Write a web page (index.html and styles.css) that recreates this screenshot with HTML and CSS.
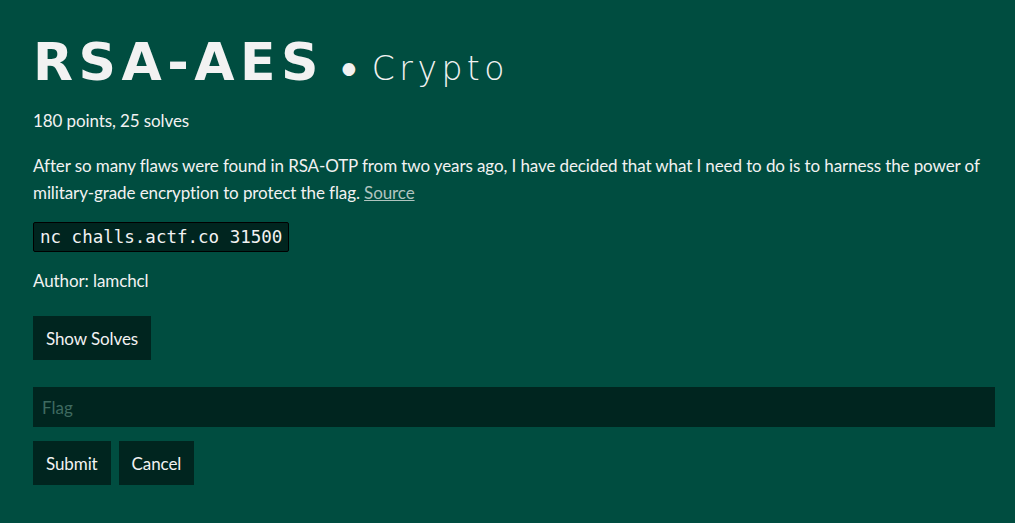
FILE: index.html
```html
<!DOCTYPE html>
<html>
<head>
<meta charset="utf-8">
<link rel="stylesheet" href="styles.css">
</head>
<body>
<main class="page">
  <h1 class="title"><span class="name">RSA-AES</span><span class="dot">•</span><span class="cat">Crypto</span></h1>
  <p class="meta">180 points, 25 solves</p>
  <p class="desc">After so many flaws were found in RSA-OTP from two years ago, I have decided that what I need to do is to harness the power of military-grade encryption to protect the flag. <a href="#" class="link">Source</a></p>
  <p class="cmd"><code>nc challs.actf.co 31500</code></p>
  <p class="author">Author: lamchcl</p>
  <button class="btn solves">Show Solves</button>
  <form class="flag-form">
    <input class="flag-input" type="text" placeholder="Flag">
    <div class="actions">
      <button class="btn" type="button">Submit</button>
      <button class="btn" type="button">Cancel</button>
    </div>
  </form>
</main>
</body>
</html>
```
FILE: styles.css
```css
html, body {
  margin: 0;
  padding: 0;
  background: #004d40;
  color: #f2f2f2;
  font-family: "Lato", "Noto Sans", sans-serif;
  font-size: 17px;
  letter-spacing: -0.1px;
}
.page {
  padding: 32px 20px 0 33px;
}
.title {
  margin: 0;
  display: flex;
  align-items: baseline;
  font-weight: normal;
  height: 68px;
  letter-spacing: 0;
}
.name {
  font-family: "DejaVu Sans", sans-serif;
  font-weight: bold;
  font-size: 52px;
  letter-spacing: 5.5px;
}
.dot {
  font-size: 34px;
  margin: 0 13px 0 15px;
}
.cat {
  font-family: "DejaVu Sans", sans-serif;
  font-size: 33px;
  font-weight: 200;
  letter-spacing: 4.5px;
}
.meta {
  margin: 8px 0 0;
  line-height: 26px;
}
.desc {
  margin: 18px 0 0;
  line-height: 27px;
  padding-right: 4px;
}
.link {
  color: #b0c4bf;
}
.cmd {
  margin: 16px 0 0;
  line-height: 0;
}
code {
  display: inline-block;
  font-family: "DejaVu Sans Mono", monospace;
  font-size: 17.5px;
  letter-spacing: 0;
  background: #00251f;
  border: 1px solid #000;
  border-radius: 2px;
  padding: 0 6px;
  line-height: 28px;
}
.author {
  margin: 16px 0 0;
  line-height: 26px;
}
.btn {
  font-family: inherit;
  font-size: 17px;
  letter-spacing: -0.1px;
  color: #f2f2f2;
  background: #00251f;
  border: none;
  padding: 0 13px;
  height: 44px;
}
.solves {
  margin-top: 22px;
}
.flag-form {
  margin-top: 27px;
}
.flag-input {
  display: block;
  box-sizing: border-box;
  width: 962px;
  height: 40px;
  border: none;
  background: #00251f;
  color: #f2f2f2;
  font-family: inherit;
  font-size: 17px;
  padding: 0 9px;
  outline: none;
}
.flag-input::placeholder {
  color: #3e6a60;
}
.actions {
  display: flex;
  gap: 8px;
  margin-top: 14px;
}
```
